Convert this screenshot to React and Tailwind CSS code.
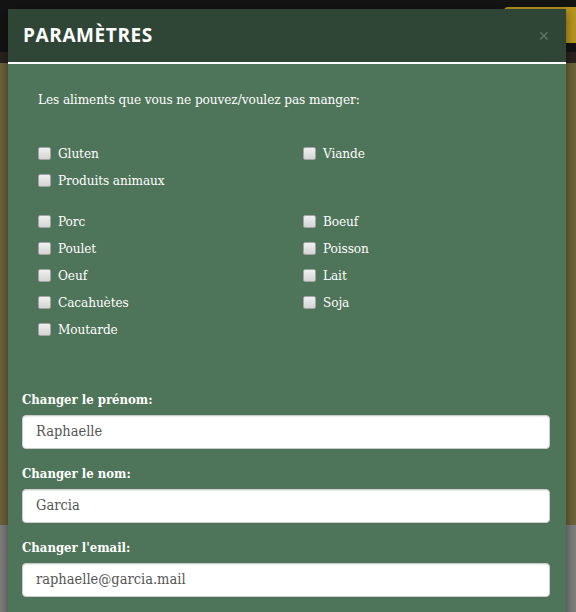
const slab = { fontFamily: '"DejaVu Serif Condensed", "Liberation Serif", serif' };

const firstGroup = [
  ['Gluten', 'Viande'],
  ['Produits animaux', null],
];

const secondGroup = [
  ['Porc', 'Boeuf'],
  ['Poulet', 'Poisson'],
  ['Oeuf', 'Lait'],
  ['Cacahuètes', 'Soja'],
  ['Moutarde', null],
];

function Check({ label }) {
  if (!label) return <div />;
  return (
    <label className="flex items-center h-[27px] text-white text-[13.5px] tracking-[-0.1px]">
      <span className="w-[13px] h-[13px] mr-[7px] rounded-[2px] border border-[#a3a3a3] bg-gradient-to-b from-[#f0f0f0] to-[#d4d4d4]" />
      {label}
    </label>
  );
}

function Field({ label, value }) {
  return (
    <div className="mb-[14px]">
      <div className="text-white font-bold text-[13px] h-[26px] leading-[22px]">{label}</div>
      <div className="h-[34px] w-[528px] bg-white rounded-[4px] border border-[#ccc] shadow-[inset_0_1px_1px_rgba(0,0,0,0.08)] flex items-center px-[13px] text-[#555] text-[14.5px]">
        {value}
      </div>
    </div>
  );
}

export default function App() {
  return (
    <div className="relative w-[576px] h-[612px] overflow-hidden bg-[#6e6338]" style={slab}>
      {/* page behind the modal */}
      <div className="absolute inset-x-0 top-0 h-[52px] bg-[#141414]" />
      <div className="absolute right-[-6px] top-[7px] w-[78px] h-[36px] rounded-[4px] bg-[#b8971f]" />
      <div className="absolute inset-x-0 top-[52px] h-[11px] bg-[#2b2220]" />
      <div className="absolute inset-x-0 top-[525px] bottom-0 bg-[#7f7f7f]" />

      {/* modal */}
      <div className="absolute left-[8px] top-[9px] w-[558px] h-[640px] bg-[#4e7459] shadow-[0_3px_10px_rgba(0,0,0,0.5)]">
        <div className="h-[55px] bg-[#2f4637] border-b-2 border-white flex items-center justify-between px-[15px]">
          <h1 className="text-white text-[19px] font-bold tracking-[0.6px]" style={{ fontFamily: '"Open Sans", Inter, sans-serif' }}>
            PARAMÈTRES
          </h1>
          <span className="text-[#5f7768] text-[18px] leading-none pr-[2px]" style={{ fontFamily: 'Arial, sans-serif' }}>×</span>
        </div>

        <div className="px-[30px] pt-[25px]">
          <p className="text-white text-[13.5px] tracking-[-0.1px] h-[51px] leading-[20px]">Les aliments que vous ne pouvez/voulez pas manger:</p>
          <div className="grid grid-cols-[265px_1fr] mb-[14px]">
            {firstGroup.map(([a, b], i) => (
              <div key={i} className="contents">
                <Check label={a} />
                <Check label={b} />
              </div>
            ))}
          </div>
          <div className="grid grid-cols-[265px_1fr]">
            {secondGroup.map(([a, b], i) => (
              <div key={i} className="contents">
                <Check label={a} />
                <Check label={b} />
              </div>
            ))}
          </div>
        </div>

        <div className="px-[14px] pt-[46px]">
          <Field label="Changer le prénom:" value="Raphaelle" />
          <Field label="Changer le nom:" value="Garcia" />
          <Field label="Changer l'email:" value="raphaelle@garcia.mail" />
        </div>
      </div>
    </div>
  );
}
